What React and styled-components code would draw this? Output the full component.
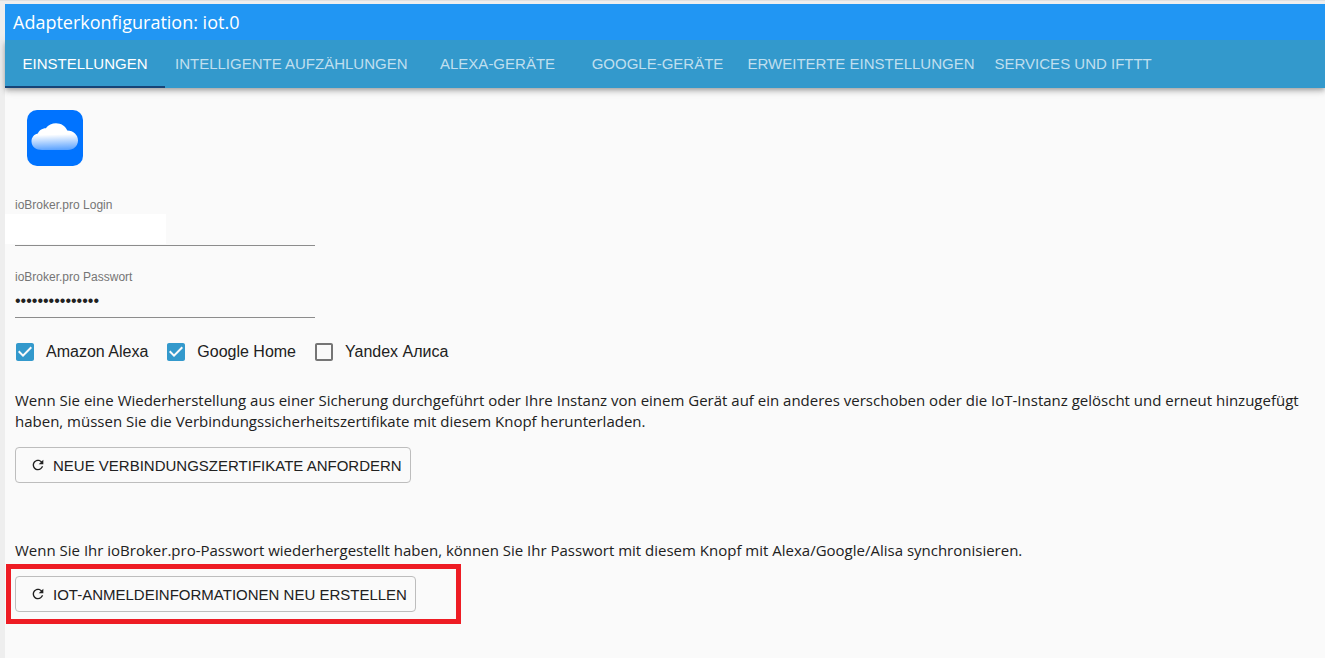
import React, { useState } from 'react'
import styled, { createGlobalStyle } from 'styled-components'

const GlobalStyle = createGlobalStyle`
*{
box-sizing: border-box;
}
body{
margin: 0;
background-color: #eeeeee;
color: #212121;
font-family: 'Liberation Sans', Arial, sans-serif;
}
`

const Page = styled.div`
display: flex;
flex-direction: column;
min-height: 100vh;
padding: 4px 0 0 5px;
box-shadow: inset 0 1px 0 #e0e0e0;
`

const Title = styled.h1`
position: relative;
z-index: 1;
margin: 0;
padding: 0 8px;
background-color: #2196f3;
color: white;
font-family: 'Open Sans', 'Noto Sans', sans-serif;
font-size: 18px;
font-weight: 400;
line-height: 36px;
`

const Tabs = styled.nav`
position: relative;
display: flex;
background-color: #3399cc;
box-shadow: 0 2px 4px -1px rgba(0,0,0,.2), 0 4px 5px 0 rgba(0,0,0,.14), 0 1px 10px 0 rgba(0,0,0,.12);
`

const Tab = styled.button`
min-width: 160px;
height: 48px;
padding: 0 10px;
border: none;
border-bottom: 2px solid ${({ $active }) => ($active ? '#164477' : 'transparent')};
background: none;
color: ${({ $active }) => ($active ? 'white' : 'rgba(255,255,255,.7)')};
font-family: inherit;
font-size: 15px;
white-space: nowrap;
cursor: pointer;
`

const Content = styled.main`
flex: 1;
display: flex;
flex-direction: column;
align-items: flex-start;
padding: 22px 10px;
background-color: #fafafa;
`

const Logo = styled.svg`
width: 56px;
height: 56px;
margin: 0 12px 31px;
`

const Field = styled.div`
position: relative;
display: flex;
flex-direction: column;
width: 300px;
margin-bottom: 23px;
`

const FieldLabel = styled.label`
color: #757575;
font-size: 12px;
line-height: 16px;
`

const FieldInput = styled.input`
height: 33px;
padding: 0;
border: none;
border-bottom: 1px solid #8c8c8c;
outline: none;
background: none;
color: #212121;
font-family: inherit;
font-size: 16px;
`

/* hides the account name */
const Cover = styled.span`
position: absolute;
top: 17px;
left: -10px;
width: 161px;
height: 30px;
background-color: white;
`

const Options = styled.div`
display: flex;
gap: 16px;
margin: -1px 0 26px -2px;
`

const Option = styled.label`
position: relative;
display: flex;
align-items: center;
gap: 9px;
font-size: 16px;
line-height: 24px;
cursor: pointer;
`

const OptionInput = styled.input`
position: absolute;
top: 0;
left: 0;
width: 24px;
height: 24px;
margin: 0;
opacity: 0;
cursor: pointer;
`

const OptionIcon = styled.svg`
width: 24px;
height: 24px;
fill: ${({ $checked }) => ($checked ? '#3399cc' : '#757575')};
`

const Hint = styled.p`
margin: 0 0 15px;
font-family: 'Open Sans', 'Noto Sans', sans-serif;
font-size: 15px;
line-height: 21px;
`

const Action = styled.div`
position: relative;
margin-bottom: ${({ $gap }) => $gap || 0}px;
`

const ActionButton = styled.button`
display: flex;
align-items: center;
gap: 7px;
height: 36px;
padding: 0 8px 0 14px;
border: 1px solid #bdbdbd;
border-radius: 4px;
background: none;
color: #212121;
font-family: inherit;
font-size: 15px;
white-space: nowrap;
cursor: pointer;
`

const RefreshSvg = styled.svg`
width: 16px;
height: 16px;
fill: currentColor;
`

const Marker = styled.span`
position: absolute;
top: -12px;
right: -45px;
bottom: -12px;
left: -9px;
border: 5px solid #ee1c24;
pointer-events: none;
`

const tabs = [
  'EINSTELLUNGEN',
  'INTELLIGENTE AUFZÄHLUNGEN',
  'ALEXA-GERÄTE',
  'GOOGLE-GERÄTE',
  'ERWEITERTE EINSTELLUNGEN',
  'SERVICES UND IFTTT',
]

const Refresh = () => (
  <RefreshSvg viewBox="0 0 24 24" aria-hidden="true">
    <path d="M17.65 6.35C16.2 4.9 14.21 4 12 4c-4.42 0-7.99 3.58-7.99 8s3.57 8 7.99 8c3.73 0 6.84-2.55 7.73-6h-2.08c-.82 2.33-3.04 4-5.65 4-3.31 0-6-2.69-6-6s2.69-6 6-6c1.66 0 3.14.69 4.22 1.78L13 11h7V4l-2.35 2.35z" />
  </RefreshSvg>
)

const Checkbox = ({ label, initial }) => {
  const [checked, setChecked] = useState(initial)
  return (
    <Option>
      <OptionInput type="checkbox" checked={checked} onChange={() => setChecked(!checked)} />
      <OptionIcon viewBox="0 0 24 24" $checked={checked} aria-hidden="true">
        {checked ? (
          <path d="M19 3H5c-1.11 0-2 .9-2 2v14c0 1.1.89 2 2 2h14c1.11 0 2-.9 2-2V5c0-1.1-.89-2-2-2zm-9 14l-5-5 1.41-1.41L10 14.17l7.59-7.59L19 8l-9 9z" />
        ) : (
          <path d="M19 5v14H5V5h14m0-2H5c-1.1 0-2 .9-2 2v14c0 1.1.9 2 2 2h14c1.1 0 2-.9 2-2V5c0-1.1-.9-2-2-2z" />
        )}
      </OptionIcon>
      {label}
    </Option>
  )
}

const App = () => {
  const [active, setActive] = useState(0)
  const [login, setLogin] = useState('')
  const [password, setPassword] = useState('iobroker-secret')

  return (
    <>
      <GlobalStyle />
      <Page>
        <Title>Adapterkonfiguration: iot.0</Title>
        <Tabs>
          {tabs.map((tab, i) => (
            <Tab key={tab} $active={i === active} onClick={() => setActive(i)}>
              {tab}
            </Tab>
          ))}
        </Tabs>
        <Content>
          <Logo viewBox="0 0 56 56" aria-hidden="true">
            <defs>
              <linearGradient id="cloud" x1="0.47" y1="0" x2="0.53" y2="1">
                <stop offset="0.42" stopColor="#ffffff" />
                <stop offset="1" stopColor="#5aa2ff" />
              </linearGradient>
            </defs>
            <rect width="56" height="56" rx="10" fill="#0073ff" />
            <path
              d="M15 40C9 40 4.500 36.500 4.500 31.500C4.500 27.500 7 24.500 10.800 23.600C12 20.500 15 18.200 18.800 18.200C21.300 15 25 13.300 29 13.300C34 13.300 38.500 16 40.300 20.600C46.500 20.800 51 25 51 30.500C51 36 46.500 40 41 40Z"
              fill="url(#cloud)"
            />
          </Logo>
          <Field>
            <FieldLabel htmlFor="login">ioBroker.pro Login</FieldLabel>
            <FieldInput id="login" type="text" value={login} onChange={(e) => setLogin(e.target.value)} />
            <Cover />
          </Field>
          <Field>
            <FieldLabel htmlFor="password">ioBroker.pro Passwort</FieldLabel>
            <FieldInput
              id="password"
              type="password"
              value={password}
              onChange={(e) => setPassword(e.target.value)}
            />
          </Field>
          <Options>
            <Checkbox label="Amazon Alexa" initial={true} />
            <Checkbox label="Google Home" initial={true} />
            <Checkbox label="Yandex Алиса" initial={false} />
          </Options>
          <Hint>
            Wenn Sie eine Wiederherstellung aus einer Sicherung durchgeführt oder Ihre Instanz von einem Gerät auf
            ein anderes verschoben oder die IoT-Instanz gelöscht und erneut hinzugefügt haben, müssen Sie die
            Verbindungssicherheitszertifikate mit diesem Knopf herunterladen.
          </Hint>
          <Action $gap={57}>
            <ActionButton>
              <Refresh />
              NEUE VERBINDUNGSZERTIFIKATE ANFORDERN
            </ActionButton>
          </Action>
          <Hint>
            Wenn Sie Ihr ioBroker.pro-Passwort wiederhergestellt haben, können Sie Ihr Passwort mit diesem Knopf mit
            Alexa/Google/Alisa synchronisieren.
          </Hint>
          <Action>
            <ActionButton>
              <Refresh />
              IOT-ANMELDEINFORMATIONEN NEU ERSTELLEN
            </ActionButton>
            <Marker />
          </Action>
        </Content>
      </Page>
    </>
  )
}

export default App
